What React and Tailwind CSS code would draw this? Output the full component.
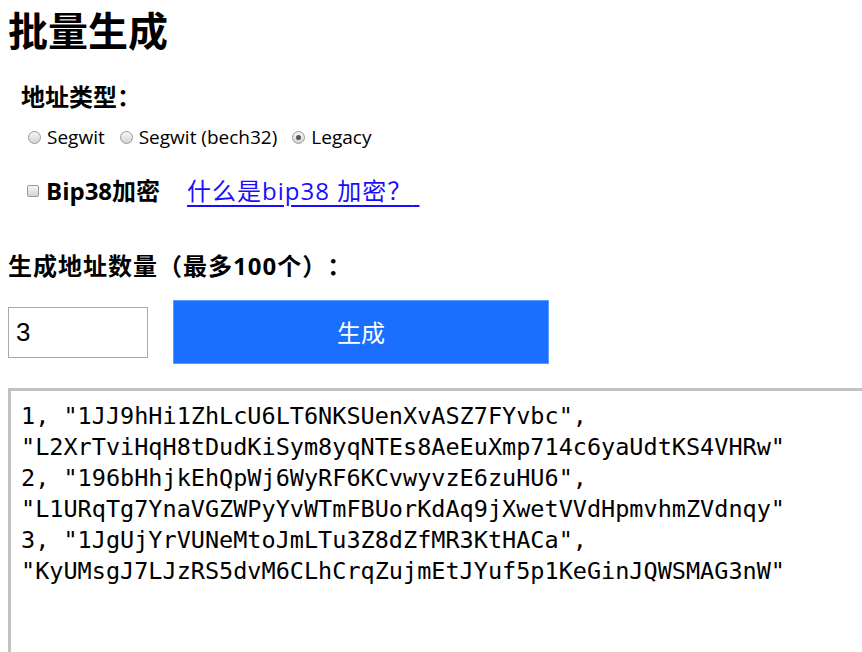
import React, { useState } from 'react';

const cjk = "font-['Open_Sans','Noto_Sans_CJK_SC',sans-serif] [text-spacing-trim:space-all]";

function Radio({ checked, label, onClick }) {
  return (
    <label onClick={onClick} className="flex items-center cursor-pointer">
      <span className="flex h-[13px] w-[13px] items-center justify-center rounded-full border border-[#9a9a9a] bg-gradient-to-b from-[#f6f6f6] to-[#d4d4d4]">
        {checked && <span className="h-[5px] w-[5px] rounded-full bg-[#555]" />}
      </span>
      <span className="ml-[6px] text-[19px] leading-[22px] text-black">{label}</span>
    </label>
  );
}

export default function App() {
  const [type, setType] = useState('Legacy');
  const [count, setCount] = useState('3');

  const output = [
    ['1JJ9hHi1ZhLcU6LT6NKSUenXvASZ7FYvbc', 'L2XrTviHqH8tDudKiSym8yqNTEs8AeEuXmp714c6yaUdtKS4VHRw'],
    ['196bHhjkEhQpWj6WyRF6KCvwyvzE6zuHU6', 'L1URqTg7YnaVGZWPyYvWTmFBUorKdAq9jXwetVVdHpmvhmZVdnqy'],
    ['1JgUjYrVUNeMtoJmLTu3Z8dZfMR3KtHACa', 'KyUMsgJ7LJzRS5dvM6CLhCrqZujmEtJYuf5p1KeGinJQWSMAG3nW'],
  ]
    .map(([addr, key], i) => `${i + 1}, "${addr}",\n"${key}"`)
    .join('\n');

  return (
    <div className={`${cjk} h-[652px] w-[862px] overflow-hidden bg-white pl-[8px] text-black`}>
      <h1 className="pt-[6px] text-[40px] font-bold leading-[50px]">批量生成</h1>

      <div className="pl-[13px]">
        <div className="mt-[26px] text-[24px] font-bold leading-[30px]">地址类型：</div>
        <div className="mt-[14px] flex items-center gap-[15px] pl-[7px]">
          <Radio label="Segwit" checked={type === 'Segwit'} onClick={() => setType('Segwit')} />
          <Radio label="Segwit (bech32)" checked={type === 'bech32'} onClick={() => setType('bech32')} />
          <Radio label="Legacy" checked={type === 'Legacy'} onClick={() => setType('Legacy')} />
        </div>

        <div className="mt-[28px] flex items-center pl-[6px]">
          <span className="h-[12px] w-[12px] rounded-[2px] border border-[#9a9a9a] bg-gradient-to-b from-[#f6f6f6] to-[#d4d4d4]" />
          <span className="ml-[7px] text-[24px] font-bold leading-[30px]">Bip38加密</span>
          <a href="#" className="ml-[27px] text-[24px] leading-[30px] tracking-[1px] text-[#1a0dff] underline underline-offset-[5px]">
            什么是bip38 加密？{'\u00a0'}
          </a>
        </div>
      </div>

      <div className="mt-[45px] text-[24px] font-bold leading-[30px] tracking-[1px]">生成地址数量（最多100个）：</div>

      <div className="mt-[19px] flex items-center gap-[25px]">
        <input
          value={count}
          onChange={(e) => setCount(e.target.value)}
          className="h-[51px] w-[140px] border border-[#a9a9a9] px-[7px] font-['Liberation_Sans',sans-serif] text-[26px] outline-none"
        />
        <button className="h-[64px] w-[376px] border border-[#5c9cff] bg-[#1a6fff] font-['Noto_Sans_CJK_SC',sans-serif] text-[24px] text-white">
          生成
        </button>
      </div>

      <textarea
        readOnly
        value={output}
        className="mt-[24px] h-[300px] w-[900px] resize-none border-[3px] border-r-0 border-b-0 border-[#c2c2c2] px-[10px] pt-[10px] font-['DejaVu_Sans_Mono','Liberation_Mono',monospace] text-[23.5px] leading-[31px] outline-none"
      />
    </div>
  );
}
